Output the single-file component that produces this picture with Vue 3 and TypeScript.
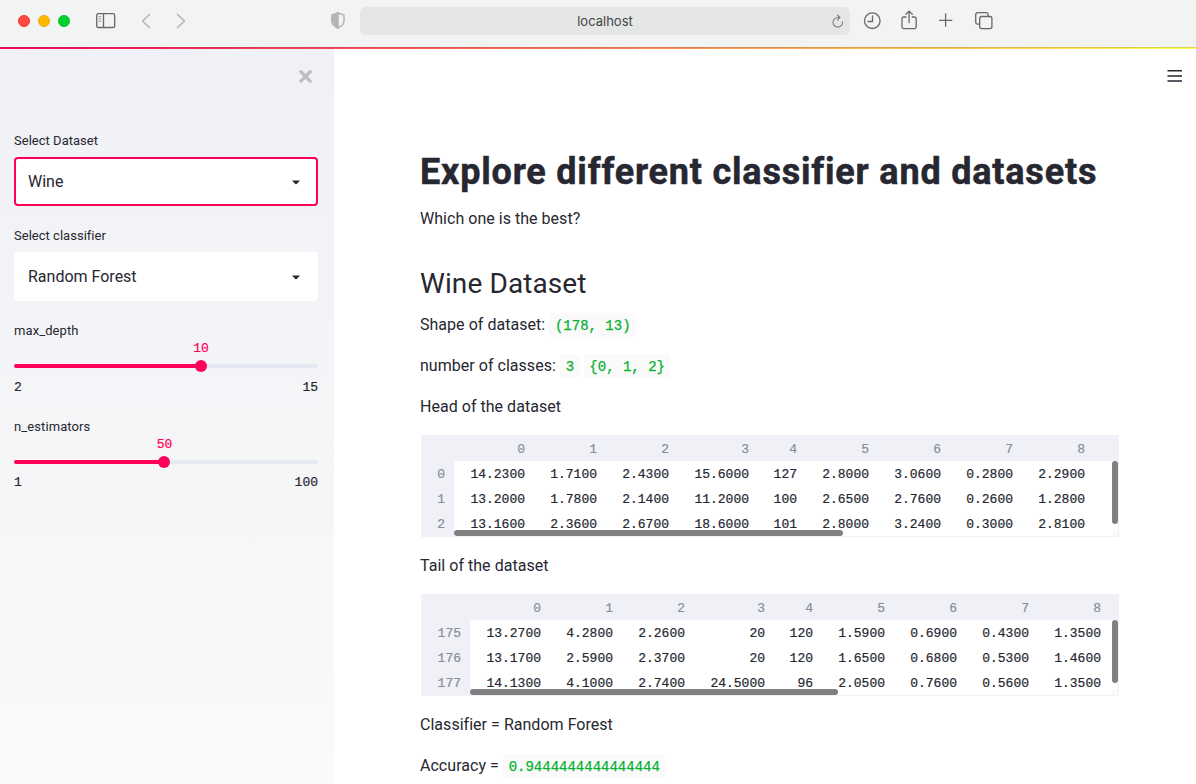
<script setup lang="ts">
interface Frame {
  title: string
  indexWidth: number
  thumbWidth: number
  index: string[]
  rows: string[][]
}

interface Slider {
  label: string
  min: number
  max: number
  value: number
}

const selects = [
  { label: 'Select Dataset', value: 'Wine', focused: true },
  { label: 'Select classifier', value: 'Random Forest', focused: false },
]

const sliders: Slider[] = [
  { label: 'max_depth', min: 2, max: 15, value: 10 },
  { label: 'n_estimators', min: 1, max: 100, value: 50 },
]

const percent = (s: Slider): string => `${((s.value - s.min) / (s.max - s.min)) * 100}%`

const columns = ['0', '1', '2', '3', '4', '5', '6', '7', '8']

const frames: Frame[] = [
  {
    title: 'Head of the dataset',
    indexWidth: 33,
    thumbWidth: 389,
    index: ['0', '1', '2'],
    rows: [
      ['14.2300', '1.7100', '2.4300', '15.6000', '127', '2.8000', '3.0600', '0.2800', '2.2900'],
      ['13.2000', '1.7800', '2.1400', '11.2000', '100', '2.6500', '2.7600', '0.2600', '1.2800'],
      ['13.1600', '2.3600', '2.6700', '18.6000', '101', '2.8000', '3.2400', '0.3000', '2.8100'],
    ],
  },
  {
    title: 'Tail of the dataset',
    indexWidth: 49,
    thumbWidth: 368,
    index: ['175', '176', '177'],
    rows: [
      ['13.2700', '4.2800', '2.2600', '20', '120', '1.5900', '0.6900', '0.4300', '1.3500'],
      ['13.1700', '2.5900', '2.3700', '20', '120', '1.6500', '0.6800', '0.5300', '1.4600'],
      ['14.1300', '4.1000', '2.7400', '24.5000', '96', '2.0500', '0.7600', '0.5600', '1.3500'],
    ],
  },
]
</script>

<template>
  <div class="window">
    <header class="toolbar">
      <div class="lights">
        <i class="light red"></i><i class="light yellow"></i><i class="light green"></i>
      </div>
      <svg class="ic sidebar-icon" width="20" height="16" viewBox="0 0 20 16">
        <rect x="0.7" y="0.7" width="18" height="13.8" rx="1.6" />
        <path d="M7.5 1v13.2" />
        <path class="thin" d="M2.8 3.7h2M2.8 6h2M2.8 8.3h2" />
      </svg>
      <svg class="ic pale back" width="10" height="16" viewBox="0 0 10 16"><path d="M8.5 1.5 1.5 8l7 6.5" /></svg>
      <svg class="ic pale forward" width="10" height="16" viewBox="0 0 10 16"><path d="m1.5 1.5 7 6.5-7 6.5" /></svg>
      <svg class="shield" width="14" height="17" viewBox="0 0 14 17">
        <path d="M7 1 13 3v6.1c0 2.900-2.200 5.200-6 7.100C3.200 14.300 1 12 1 9.100V3z" />
        <path class="half" d="M7 1v15.200C3.200 14.300 1 12 1 9.100V3z" />
      </svg>
      <div class="address">
        <span>localhost</span>
        <svg class="ic reload" width="12" height="14" viewBox="0 0 12 14">
          <path d="M10.600 7.900A4.800 4.800 0 1 1 5.900 3.500h1.700M5.400 1l2.500 2.500-2.500 2.500" />
        </svg>
      </div>
      <svg class="ic clock" width="18" height="18" viewBox="0 0 18 18">
        <circle cx="9.300" cy="8.700" r="7.800" /><path d="M9.500 3.900v5.600H5" />
      </svg>
      <svg class="ic share" width="16" height="20" viewBox="0 0 16 20">
        <path d="M5 7H2.800A1.800 1.800 0 0 0 1 8.800v8a1.800 1.800 0 0 0 1.800 1.800h10.600a1.800 1.800 0 0 0 1.800-1.800v-8A1.800 1.800 0 0 0 13.400 7h-2.200M8.100 12.500V1.300M4.900 4.300l3.200-3.200 3.200 3.200" />
      </svg>
      <svg class="ic plus" width="14" height="14" viewBox="0 0 14 14"><path d="M6.600 .9v12.400M.4 7.300h12.400" /></svg>
      <svg class="ic tabs" width="18" height="18" viewBox="0 0 18 18">
        <rect x="4.700" y="4.500" width="12.200" height="12.100" rx="2" />
        <path d="M4.500 12.200H2.700a2 2 0 0 1-2-2V2.600a2 2 0 0 1 2-2h8.400a2 2 0 0 1 2 2v1.700" />
      </svg>
    </header>
    <div class="rainbow"></div>

    <div class="body">
      <aside class="side">
        <svg class="close" width="14" height="14" viewBox="0 0 14 14"><path d="m1.900 1.800 9.300 9.300M11.200 1.800l-9.300 9.300" /></svg>
        <section v-for="s in selects" :key="s.label" class="field">
          <label>{{ s.label }}</label>
          <div class="select" :class="{ focused: s.focused }">
            <span>{{ s.value }}</span>
            <svg width="8" height="5" viewBox="0 0 8 5"><path d="M.4.4h7.200v.7L4.700 3.900q-.7.600-1.400 0L.4 1.100z" /></svg>
          </div>
        </section>
        <section v-for="s in sliders" :key="s.label" class="slider">
          <label>{{ s.label }}</label>
          <div class="value-row"><span class="value" :style="{ left: percent(s) }">{{ s.value }}</span></div>
          <div class="track">
            <div class="fill" :style="{ width: percent(s) }"></div>
            <i class="thumb" :style="{ left: percent(s) }"></i>
          </div>
          <div class="range"><span>{{ s.min }}</span><span>{{ s.max }}</span></div>
        </section>
      </aside>

      <main class="main">
        <svg class="menu" width="15" height="13" viewBox="0 0 15 13"><path d="M.5 1.700H15M.5 7H15M.5 12H15" /></svg>
        <h1>Explore different classifier and datasets</h1>
        <p>Which one is the best?</p>
        <h2>Wine Dataset</h2>
        <p>Shape of dataset: <code>(178, 13)</code></p>
        <p>number of classes: <code>3</code> <code>{0, 1, 2}</code></p>
        <template v-for="f in frames" :key="f.title">
          <p>{{ f.title }}</p>
          <div class="frame">
            <div class="index" :style="{ width: f.indexWidth + 'px' }">
              <div class="cell head"></div>
              <div v-for="i in f.index" :key="i" class="cell">{{ i }}</div>
            </div>
            <div class="data">
              <div class="row heading">
                <div v-for="c in columns" :key="c" class="cell head">{{ c }}</div>
              </div>
              <div v-for="(r, n) in f.rows" :key="n" class="row">
                <div v-for="(v, k) in r" :key="k" class="cell">{{ v }}</div>
              </div>
              <i class="hbar" :style="{ width: f.thumbWidth + 'px' }"></i>
              <i class="vbar"></i>
              <i class="corner"></i>
            </div>
          </div>
        </template>
        <p>Classifier = Random Forest</p>
        <p>Accuracy = <code>0.9444444444444444</code></p>
      </main>
    </div>
  </div>
</template>

<style>
body {
  margin: 0;
  overflow: hidden;
}
</style>

<style scoped>
.window {
  width: 1196px;
  height: 784px;
  overflow: hidden;
  display: flex;
  flex-direction: column;
  background: #fff;
  color: #262730;
  font-family: Roboto, sans-serif;
  font-size: 16px;
}
.toolbar {
  height: 47px;
  flex: none;
  display: flex;
  align-items: flex-start;
  background: #f2f4f3;
}
.toolbar > * {
  flex: none;
}
.ic {
  fill: none;
  stroke: #676968;
  stroke-width: 1.3;
  stroke-linecap: round;
  stroke-linejoin: round;
}
.lights {
  display: flex;
  gap: 8px;
  margin: 15px 0 0 18px;
}
.light {
  width: 12px;
  height: 12px;
  border-radius: 50%;
  box-sizing: border-box;
}
.red {
  background: #ff4a42;
  border: 1px solid #f3312b;
}
.yellow {
  background: #ffba00;
  border: 1px solid #eba80c;
}
.green {
  background: #00cf2c;
  border: 1px solid #0ebc27;
}
.sidebar-icon {
  margin: 13px 0 0 26px;
}
.sidebar-icon .thin {
  stroke-width: 1;
  stroke: #979998;
}
.ic.pale {
  stroke: #b3b5b4;
  stroke-width: 1.6;
}
.back {
  margin: 13px 0 0 25px;
}
.forward {
  margin: 13px 0 0 25px;
}
.shield {
  margin: 12px 0 0 145px;
  fill: none;
  stroke: #b3b5b4;
  stroke-width: 1.5;
}
.shield .half {
  fill: #b3b5b4;
}
.address {
  width: 490px;
  height: 28px;
  margin: 7px 0 0 15px;
  border-radius: 6px;
  background: #e5e7e6;
  display: flex;
  align-items: center;
  justify-content: center;
  position: relative;
  font: 13px/28px Inter, sans-serif;
  color: #444645;
}
.reload {
  position: absolute;
  right: 6px;
  top: 7px;
  stroke: #7d7f7e;
  stroke-width: 1.1;
}
.clock {
  margin: 12px 0 0 13px;
}
.share {
  margin: 10px 0 0 20px;
}
.plus {
  margin: 13px 0 0 22px;
}
.tabs {
  margin: 12px 0 0 22px;
}
.rainbow {
  height: 2px;
  flex: none;
  background:
    linear-gradient(rgba(70, 70, 70, 0.2) 50%, transparent 50%),
    linear-gradient(90deg, #ff005a, #fffd50);
}
.body {
  flex: 1;
  min-height: 0;
  display: flex;
}
.side {
  width: 334px;
  box-sizing: border-box;
  padding: 21px 16px 0 14px;
  background: linear-gradient(#f0f1f6, #fafafa);
  display: flex;
  flex-direction: column;
}
.close {
  align-self: flex-end;
  margin: 0 5px 49px 0;
  stroke: #bdbec4;
  stroke-width: 3.4;
  stroke-linecap: round;
}
.field,
.slider {
  display: flex;
  flex-direction: column;
}
.field {
  margin-bottom: 22px;
}
.slider {
  margin-bottom: 24px;
}
label {
  font-size: 13px;
  line-height: 15px;
  letter-spacing: 0.02px;
}
.slider label {
  letter-spacing: 0.1px;
}
.select {
  margin-top: 9px;
  height: 49px;
  box-sizing: border-box;
  border: 2px solid #fff;
  border-radius: 4px;
  background: #fff;
  padding: 0 16px 0 12px;
  display: flex;
  align-items: center;
  justify-content: space-between;
}
.select.focused {
  border-color: #ff0058;
}
.select svg {
  fill: #262730;
  margin-top: 1px;
}
.value-row {
  height: 15px;
  margin-top: 3px;
  position: relative;
}
.value,
.range {
  font: 13px/15px "Liberation Mono", monospace;
  -webkit-text-stroke: 0.2px;
}
.value {
  position: absolute;
  top: 0;
  transform: translateX(-50%);
  color: #ff0058;
}
.track {
  height: 4px;
  margin-top: 8px;
  border-radius: 2px;
  background: #e6e9f1;
  position: relative;
}
.fill {
  height: 4px;
  border-radius: 2px;
  background: #ff0058;
}
.thumb {
  position: absolute;
  top: -4px;
  width: 12px;
  height: 12px;
  margin-left: -6px;
  border-radius: 50%;
  background: #ff0058;
}
.range {
  margin-top: 12px;
  display: flex;
  justify-content: space-between;
}
.slider:last-child .range {
  margin-top: 11px;
}
.main {
  flex: 1;
  min-width: 0;
  padding: 20px 0 0 86px;
  display: flex;
  flex-direction: column;
}
.menu {
  align-self: flex-end;
  flex: none;
  margin: 0 14px 69px 0;
  stroke: #262730;
  stroke-width: 1.6;
}
h1 {
  margin: 0 0 13px;
  font-size: 36px;
  font-weight: 700;
  line-height: 42px;
  letter-spacing: 0.8px;
  -webkit-text-stroke: 0.5px;
  font-variant-ligatures: none;
  white-space: nowrap;
}
h2 {
  margin: 20px 0 12px;
  font-size: 28px;
  font-weight: 400;
  line-height: 33px;
  letter-spacing: 0.1px;
}
p {
  margin: 0 0 16px;
  height: 25px;
  line-height: 25px;
  letter-spacing: 0.03px;
  flex: none;
}
code {
  font: 14px/16px "Liberation Mono", monospace;
  -webkit-text-stroke: 0.25px;
  letter-spacing: 0;
  color: #05b12f;
  background: #fafafa;
  border-radius: 4px;
  margin-left: 0.3px;
  padding: 5px 5.500px 3px;
}
.frame {
  width: 698px;
  height: 102px;
  flex: none;
  box-sizing: border-box;
  margin: 0 0 16px 1px;
  border: 1px solid #f0f1f6;
  border-width: 0 1px 1px 0;
  display: flex;
  overflow: hidden;
  font: 13px/25px "Liberation Mono", monospace;
  -webkit-text-stroke: 0.2px;
}
.index {
  flex: none;
  background: #f0f1f6;
  color: #8a8b9f;
}
.cell {
  box-sizing: border-box;
  height: 25px;
  padding: 1px 9px 0 0;
  text-align: right;
}
.cell.head {
  height: 26px;
  padding-top: 2px;
}
.data {
  flex: 1;
  min-width: 0;
  position: relative;
}
.row {
  display: grid;
  grid-template-columns: 80px 72px 72px 80px 48px 72px 72px 72px 72px;
}
.heading {
  background: #f0f1f6;
  color: #8a8b9f;
}
.hbar,
.vbar {
  position: absolute;
  background: #808080;
  border-radius: 3px;
}
.hbar {
  left: 0;
  bottom: 0;
  height: 6px;
}
.vbar {
  right: 0;
  top: 26px;
  width: 6px;
  height: 63px;
}
.corner {
  position: absolute;
  right: 0;
  bottom: 0;
  width: 6px;
  height: 6px;
  background: #fafafa;
}
</style>
